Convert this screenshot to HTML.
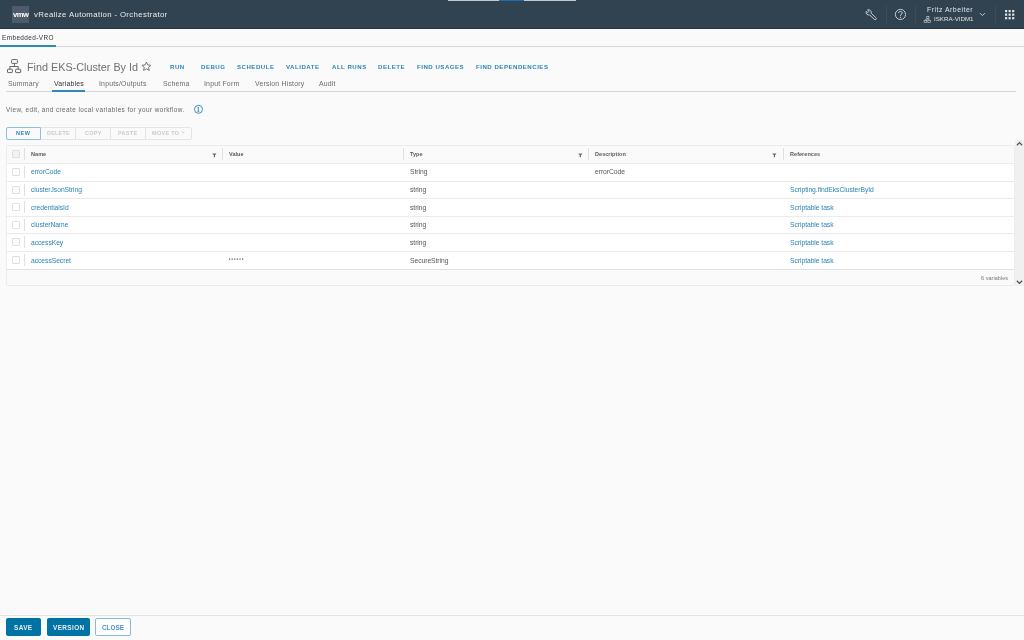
<!DOCTYPE html>
<html><head><meta charset="utf-8">
<style>
*{box-sizing:border-box;margin:0;padding:0}
html,body{width:1024px;height:640px;overflow:hidden;background:#fafafa;font-family:"Liberation Sans",sans-serif}
.t{position:absolute;white-space:nowrap;line-height:12px;will-change:transform}
.a{position:absolute}
</style></head><body>
<div class="a" style="left:0;top:0;width:1024px;height:28px;background:#314351"></div><div class="a" style="left:0;top:28px;width:1024px;height:1px;background:#25343f"></div><div class="a" style="left:448px;top:0;width:128px;height:1px;background:#c5c8cb"></div><div class="a" style="left:499px;top:0;width:25px;height:1px;background:#1d6cb0"></div><div class="a" style="left:12px;top:6px;width:17px;height:17px;background:#4e5c6a"></div><div class="t" style="left:12.5px;top:8.77px;font-size:7.6px;color:#fff;font-weight:700;letter-spacing:-0.45px;">vmw</div>
<div class="t" style="left:33.7px;top:8.50px;font-size:7.8px;color:#e8ecef;font-weight:400;letter-spacing:0.36px;">vRealize Automation - Orchestrator</div>
<div class="t" style="left:926.8px;top:3.51px;font-size:6.9px;color:#dfe4e8;font-weight:400;letter-spacing:0.5px;">Fritz Arbeiter</div>
<div class="t" style="left:933.5px;top:12.75px;font-size:6.2px;color:#dfe4e8;font-weight:400;letter-spacing:0.0px;">ISKRA-VIDM1</div>
<div class="a" style="left:886px;top:5px;width:1px;height:19px;background:#3c4d5a"></div><div class="a" style="left:915px;top:5px;width:1px;height:19px;background:#3c4d5a"></div><div class="a" style="left:995px;top:5px;width:1px;height:19px;background:#3c4d5a"></div><svg class="a" style="left:860px;top:4px" width="24" height="22" viewBox="0 0 24 22"><g transform="translate(8.7,8.4) rotate(44)"><path d="M-2.5 -0.95 L-0.5 -0.95 L-0.5 0.95 L-2.5 0.95 A2.7 2.7 0 0 0 2.4 1.15 L8.9 1.15 A1.15 1.15 0 0 0 8.9 -1.15 L2.4 -1.15 A2.7 2.7 0 0 0 -2.5 -0.95 Z" fill="none" stroke="#d3d9de" stroke-width="0.85" stroke-linejoin="round"/></g></svg><svg class="a" style="left:890px;top:5px" width="22" height="20" viewBox="0 0 22 20"><circle cx="10.45" cy="9.45" r="5.1" fill="none" stroke="#d3d9de" stroke-width="0.9"/><path d="M8.7 8.0 C8.6 6.9 9.4 6.5 10.5 6.5 C11.6 6.5 12.3 7.1 12.3 7.9 C12.3 9.0 10.7 9.2 10.6 10.3 L10.6 11.2" fill="none" stroke="#d3d9de" stroke-width="1"/><circle cx="10.5" cy="12.6" r="0.65" fill="#d3d9de"/></svg><svg class="a" style="left:920px;top:3px" width="14" height="22" viewBox="0 0 14 22" fill="none" stroke="#cfd6db" stroke-width="0.6"><rect x="6.8" y="13.3" width="2.1" height="1.9"/><path d="M7.85 15.2 V16.2 M5.4 17.3 V16.2 H9.2 V17.3"/><rect x="4.1" y="17.3" width="2.6" height="2.2"/><rect x="7.8" y="17.3" width="2.8" height="2.2"/></svg><svg class="a" style="left:978px;top:11px" width="8" height="7" viewBox="0 0 8 7"><path d="M2 2.2 L4.4 4.6 L6.8 2.2" fill="none" stroke="#d3d9de" stroke-width="0.9"/></svg><svg class="a" style="left:1004.9px;top:9.9px" width="10" height="10" viewBox="0 0 10 10"><rect x="0.00" y="0.00" width="2.2" height="2.2" fill="#dfe4e8"/><rect x="3.55" y="0.00" width="2.2" height="2.2" fill="#dfe4e8"/><rect x="7.10" y="0.00" width="2.2" height="2.2" fill="#dfe4e8"/><rect x="0.00" y="3.55" width="2.2" height="2.2" fill="#dfe4e8"/><rect x="3.55" y="3.55" width="2.2" height="2.2" fill="#dfe4e8"/><rect x="7.10" y="3.55" width="2.2" height="2.2" fill="#dfe4e8"/><rect x="0.00" y="7.10" width="2.2" height="2.2" fill="#dfe4e8"/><rect x="3.55" y="7.10" width="2.2" height="2.2" fill="#dfe4e8"/><rect x="7.10" y="7.10" width="2.2" height="2.2" fill="#dfe4e8"/></svg><div class="t" style="left:1.8px;top:31.58px;font-size:6.4px;color:#333;font-weight:400;letter-spacing:0.42px;">Embedded-VRO</div>
<div class="a" style="left:0;top:46px;width:1024px;height:1px;background:#d7d7d7"></div><div class="a" style="left:0;top:45px;width:56px;height:2px;background:#2e8ab8"></div><svg class="a" style="left:4px;top:56px" width="24" height="20" viewBox="0 0 24 20" fill="none" stroke="#666" stroke-width="1"><rect x="7.6" y="3.6" width="5.8" height="3.8" rx="0.6"/><path d="M10.4 7.4 V10.5 M5.9 13.2 V10.5 H14.2 V13.2"/><rect x="3.5" y="13.2" width="4.9" height="3.4" rx="0.6"/><rect x="11.6" y="13.2" width="5.1" height="3.4" rx="0.6"/></svg><div class="t" style="left:26.6px;top:60.86px;font-size:10.8px;color:#707070;font-weight:400;letter-spacing:0px;">Find EKS-Cluster By Id</div>
<svg class="a" style="left:138px;top:58px" width="18" height="18" viewBox="0 0 18 18"><path d="M8.4 4 L9.7 6.9 L12.9 7.3 L10.5 9.4 L11.3 12.4 L8.4 10.8 L5.5 12.4 L6.3 9.4 L3.9 7.3 L7.1 6.9 Z" fill="none" stroke="#666" stroke-width="0.9" stroke-linejoin="round"/></svg><div class="t" style="left:170px;top:60.79px;font-size:6.1px;color:#2a85b8;font-weight:700;letter-spacing:0.5px;">RUN</div>
<div class="t" style="left:200.8px;top:60.79px;font-size:6.1px;color:#2a85b8;font-weight:700;letter-spacing:0.5px;">DEBUG</div>
<div class="t" style="left:237px;top:60.79px;font-size:6.1px;color:#2a85b8;font-weight:700;letter-spacing:0.5px;">SCHEDULE</div>
<div class="t" style="left:285.8px;top:60.79px;font-size:6.1px;color:#2a85b8;font-weight:700;letter-spacing:0.5px;">VALIDATE</div>
<div class="t" style="left:331.7px;top:60.79px;font-size:6.1px;color:#2a85b8;font-weight:700;letter-spacing:0.5px;">ALL RUNS</div>
<div class="t" style="left:377.9px;top:60.79px;font-size:6.1px;color:#2a85b8;font-weight:700;letter-spacing:0.5px;">DELETE</div>
<div class="t" style="left:416.8px;top:60.79px;font-size:6.1px;color:#2a85b8;font-weight:700;letter-spacing:0.5px;">FIND USAGES</div>
<div class="t" style="left:475.8px;top:60.79px;font-size:6.1px;color:#2a85b8;font-weight:700;letter-spacing:0.5px;">FIND DEPENDENCIES</div>
<div class="t" style="left:7.8px;top:77.51px;font-size:6.9px;color:#6a6a6a;font-weight:400;letter-spacing:0.2px;">Summary</div>
<div class="t" style="left:53.6px;top:77.51px;font-size:6.9px;color:#333;font-weight:400;letter-spacing:0.2px;">Variables</div>
<div class="t" style="left:98.75px;top:77.51px;font-size:6.9px;color:#6a6a6a;font-weight:400;letter-spacing:0.2px;">Inputs/Outputs</div>
<div class="t" style="left:162.7px;top:77.51px;font-size:6.9px;color:#6a6a6a;font-weight:400;letter-spacing:0.2px;">Schema</div>
<div class="t" style="left:203.7px;top:77.51px;font-size:6.9px;color:#6a6a6a;font-weight:400;letter-spacing:0.2px;">Input Form</div>
<div class="t" style="left:254.5px;top:77.51px;font-size:6.9px;color:#6a6a6a;font-weight:400;letter-spacing:0.2px;">Version History</div>
<div class="t" style="left:319.1px;top:77.51px;font-size:6.9px;color:#6a6a6a;font-weight:400;letter-spacing:0.2px;">Audit</div>
<div class="a" style="left:6px;top:91px;width:1010px;height:1px;background:#d7d7d7"></div><div class="a" style="left:52px;top:90px;width:33px;height:2px;background:#2e8ab8"></div><div class="t" style="left:6.2px;top:104.18px;font-size:6.4px;color:#686868;font-weight:400;letter-spacing:0.42px;">View, edit, and create local variables for your workflow.</div>
<svg class="a" style="left:193px;top:104px" width="11" height="11" viewBox="0 0 11 11"><circle cx="5.5" cy="5.3" r="4" fill="none" stroke="#2a86b6" stroke-width="0.9"/><path d="M4.5 3.4 H6 M5.3 3.4 V7.2 M4.4 7.3 H6.3" stroke="#2a86b6" stroke-width="0.9" fill="none"/></svg><div class="a" style="left:6px;top:127px;width:186px;height:13px;border:1px solid #e4e4e4;border-radius:2px"></div><div class="a" style="left:75px;top:127px;width:1px;height:13px;background:#e4e4e4"></div><div class="a" style="left:110px;top:127px;width:1px;height:13px;background:#e4e4e4"></div><div class="a" style="left:145px;top:127px;width:1px;height:13px;background:#e4e4e4"></div><div class="a" style="left:6px;top:127px;width:35px;height:13px;border:1px solid #8fc0d9;border-radius:2px 0 0 2px;background:#fafafa"></div><div class="t" style="left:16px;top:127.39px;font-size:5.5px;color:#2e86b6;font-weight:700;letter-spacing:0.6px;">NEW</div>
<div class="t" style="left:46.8px;top:127.39px;font-size:5.5px;color:#cbcbcb;font-weight:700;letter-spacing:0.18px;">DELETE</div>
<div class="t" style="left:84.7px;top:127.39px;font-size:5.5px;color:#cbcbcb;font-weight:700;letter-spacing:0.25px;">COPY</div>
<div class="t" style="left:117.9px;top:127.39px;font-size:5.5px;color:#cbcbcb;font-weight:700;letter-spacing:0.3px;">PASTE</div>
<div class="t" style="left:151.8px;top:127.39px;font-size:5.5px;color:#cbcbcb;font-weight:700;letter-spacing:0.3px;">MOVE TO</div>
<svg class="a" style="left:180px;top:129.8px" width="6" height="5" viewBox="0 0 6 5"><path d="M1.5 1.5 L3 3 L4.5 1.5" fill="none" stroke="#c8c8c8" stroke-width="0.7"/></svg><div class="a" style="left:6px;top:145px;width:1009px;height:141px;border:1px solid #ececec;border-radius:2px;background:#fafafa"></div><div class="a" style="left:7px;top:163px;width:1007px;height:18px;background:#fff;border-top:1px solid #ebebeb"></div><div class="a" style="left:7px;top:181px;width:1007px;height:17px;background:#fff;border-top:1px solid #ebebeb"></div><div class="a" style="left:7px;top:198px;width:1007px;height:18px;background:#fff;border-top:1px solid #ebebeb"></div><div class="a" style="left:7px;top:216px;width:1007px;height:17px;background:#fff;border-top:1px solid #ebebeb"></div><div class="a" style="left:7px;top:233px;width:1007px;height:18px;background:#fff;border-top:1px solid #ebebeb"></div><div class="a" style="left:7px;top:251px;width:1007px;height:18px;background:#fff;border-top:1px solid #ebebeb"></div><div class="a" style="left:7px;top:269px;width:1007px;height:1px;background:#e0e0e0"></div><div class="a" style="left:12px;top:150px;width:8px;height:8px;border:1px solid #dedede;border-radius:1px;background:#f3f3f3"></div><div class="a" style="left:24px;top:148px;width:1px;height:12px;background:#e0e0e0"></div><div class="a" style="left:222px;top:148px;width:1px;height:12px;background:#e0e0e0"></div><div class="a" style="left:403px;top:148px;width:1px;height:12px;background:#e0e0e0"></div><div class="a" style="left:588px;top:148px;width:1px;height:12px;background:#e0e0e0"></div><div class="a" style="left:783px;top:148px;width:1px;height:12px;background:#e0e0e0"></div><div class="t" style="left:30.5px;top:148.29px;font-size:5.5px;color:#5a5a5a;font-weight:700;letter-spacing:0.05px;">Name</div>
<div class="t" style="left:228.8px;top:148.29px;font-size:5.5px;color:#5a5a5a;font-weight:700;letter-spacing:0.05px;">Value</div>
<div class="t" style="left:409.9px;top:148.29px;font-size:5.5px;color:#5a5a5a;font-weight:700;letter-spacing:0.05px;">Type</div>
<div class="t" style="left:594.6px;top:148.29px;font-size:5.5px;color:#5a5a5a;font-weight:700;letter-spacing:0.05px;">Description</div>
<div class="t" style="left:789.8px;top:148.29px;font-size:5.5px;color:#5a5a5a;font-weight:700;letter-spacing:0.05px;">References</div>
<svg class="a" style="left:211.7px;top:152.6px" width="6" height="5" viewBox="0 0 6 5"><path d="M0.2 0.6 H4.5 L3.0 2.2 V4.2 L1.8 4.2 V2.2 Z" fill="#6a6a6a"/></svg><svg class="a" style="left:577.5px;top:152.6px" width="6" height="5" viewBox="0 0 6 5"><path d="M0.2 0.6 H4.5 L3.0 2.2 V4.2 L1.8 4.2 V2.2 Z" fill="#6a6a6a"/></svg><svg class="a" style="left:772.2px;top:152.6px" width="6" height="5" viewBox="0 0 6 5"><path d="M0.2 0.6 H4.5 L3.0 2.2 V4.2 L1.8 4.2 V2.2 Z" fill="#6a6a6a"/></svg><div class="a" style="left:12px;top:168px;width:8px;height:8px;border:1px solid #dedede;border-radius:1px;background:#fff"></div><div class="a" style="left:24px;top:166px;width:1px;height:12px;background:#e0e0e0"></div><div class="t" style="left:30.7px;top:166.16px;font-size:6.75px;color:#2b83b4;font-weight:400;letter-spacing:-0.05px;">errorCode</div>
<div class="t" style="left:409.9px;top:166.16px;font-size:6.75px;color:#565656;font-weight:400;letter-spacing:-0.05px;">String</div>
<div class="t" style="left:594.6px;top:166.16px;font-size:6.75px;color:#565656;font-weight:400;letter-spacing:-0.05px;">errorCode</div>
<div class="a" style="left:12px;top:186px;width:8px;height:8px;border:1px solid #dedede;border-radius:1px;background:#fff"></div><div class="a" style="left:24px;top:184px;width:1px;height:12px;background:#e0e0e0"></div><div class="t" style="left:30.7px;top:183.91px;font-size:6.75px;color:#2b83b4;font-weight:400;letter-spacing:-0.05px;">clusterJsonString</div>
<div class="t" style="left:409.9px;top:183.91px;font-size:6.75px;color:#565656;font-weight:400;letter-spacing:-0.05px;">string</div>
<div class="t" style="left:789.8px;top:183.91px;font-size:6.75px;color:#2b83b4;font-weight:400;letter-spacing:-0.05px;">Scripting.findEksClusterById</div>
<div class="a" style="left:12px;top:203px;width:8px;height:8px;border:1px solid #dedede;border-radius:1px;background:#fff"></div><div class="a" style="left:24px;top:201px;width:1px;height:12px;background:#e0e0e0"></div><div class="t" style="left:30.7px;top:201.66px;font-size:6.75px;color:#2b83b4;font-weight:400;letter-spacing:-0.05px;">credentialsId</div>
<div class="t" style="left:409.9px;top:201.66px;font-size:6.75px;color:#565656;font-weight:400;letter-spacing:-0.05px;">string</div>
<div class="t" style="left:789.8px;top:201.66px;font-size:6.75px;color:#2b83b4;font-weight:400;letter-spacing:-0.05px;">Scriptable task</div>
<div class="a" style="left:12px;top:221px;width:8px;height:8px;border:1px solid #dedede;border-radius:1px;background:#fff"></div><div class="a" style="left:24px;top:219px;width:1px;height:12px;background:#e0e0e0"></div><div class="t" style="left:30.7px;top:219.41px;font-size:6.75px;color:#2b83b4;font-weight:400;letter-spacing:-0.05px;">clusterName</div>
<div class="t" style="left:409.9px;top:219.41px;font-size:6.75px;color:#565656;font-weight:400;letter-spacing:-0.05px;">string</div>
<div class="t" style="left:789.8px;top:219.41px;font-size:6.75px;color:#2b83b4;font-weight:400;letter-spacing:-0.05px;">Scriptable task</div>
<div class="a" style="left:12px;top:238px;width:8px;height:8px;border:1px solid #dedede;border-radius:1px;background:#fff"></div><div class="a" style="left:24px;top:236px;width:1px;height:12px;background:#e0e0e0"></div><div class="t" style="left:30.7px;top:237.16px;font-size:6.75px;color:#2b83b4;font-weight:400;letter-spacing:-0.05px;">accessKey</div>
<div class="t" style="left:409.9px;top:237.16px;font-size:6.75px;color:#565656;font-weight:400;letter-spacing:-0.05px;">string</div>
<div class="t" style="left:789.8px;top:237.16px;font-size:6.75px;color:#2b83b4;font-weight:400;letter-spacing:-0.05px;">Scriptable task</div>
<div class="a" style="left:12px;top:256px;width:8px;height:8px;border:1px solid #dedede;border-radius:1px;background:#fff"></div><div class="a" style="left:24px;top:254px;width:1px;height:12px;background:#e0e0e0"></div><div class="t" style="left:30.7px;top:254.91px;font-size:6.75px;color:#2b83b4;font-weight:400;letter-spacing:-0.05px;">accessSecret</div>
<div class="t" style="left:409.9px;top:254.91px;font-size:6.75px;color:#565656;font-weight:400;letter-spacing:-0.05px;">SecureString</div>
<div class="t" style="left:789.8px;top:254.91px;font-size:6.75px;color:#2b83b4;font-weight:400;letter-spacing:-0.05px;">Scriptable task</div>
<svg class="a" style="left:228px;top:257px" width="18" height="4" viewBox="0 0 18 4"><rect x="1.00" y="1.2" width="1.2" height="1.9" fill="#8a8a8a"/><rect x="3.60" y="1.2" width="1.2" height="1.9" fill="#8a8a8a"/><rect x="6.20" y="1.2" width="1.2" height="1.9" fill="#8a8a8a"/><rect x="8.80" y="1.2" width="1.2" height="1.9" fill="#8a8a8a"/><rect x="11.40" y="1.2" width="1.2" height="1.9" fill="#8a8a8a"/><rect x="14.00" y="1.2" width="1.2" height="1.9" fill="#8a8a8a"/></svg><div class="t" style="left:981px;top:272.39px;font-size:5.5px;color:#777;font-weight:400;letter-spacing:0.05px;">6 variables</div>
<div class="a" style="left:1015px;top:140px;width:9px;height:146px;background:#f0f0f0"></div><svg class="a" style="left:1015px;top:140px" width="9" height="8" viewBox="0 0 9 8"><path d="M1.9 5.2 L4.5 2.6 L7.1 5.2" fill="none" stroke="#505050" stroke-width="1.25"/></svg><svg class="a" style="left:1015px;top:278px" width="9" height="8" viewBox="0 0 9 8"><path d="M1.9 2.8 L4.5 5.4 L7.1 2.8" fill="none" stroke="#505050" stroke-width="1.25"/></svg><div class="a" style="left:0;top:615px;width:1024px;height:1px;background:#e3e3e3"></div><div class="a" style="left:6px;top:618px;width:35px;height:18px;background:#0072a3;border-radius:2px"></div><div class="a" style="left:47px;top:618px;width:43px;height:18px;background:#0072a3;border-radius:2px"></div><div class="a" style="left:95px;top:618px;width:36px;height:18px;background:#fff;border:1px solid #86bcd6;border-radius:2px"></div><div class="t" style="left:14.1px;top:621.78px;font-size:6.4px;color:#e6f0f6;font-weight:700;letter-spacing:0.4px;">SAVE</div>
<div class="t" style="left:52.9px;top:621.78px;font-size:6.4px;color:#e6f0f6;font-weight:700;letter-spacing:0.4px;">VERSION</div>
<div class="t" style="left:101.9px;top:621.78px;font-size:6.4px;color:#4b94bf;font-weight:700;letter-spacing:0.0px;">CLOSE</div>
</body></html>
